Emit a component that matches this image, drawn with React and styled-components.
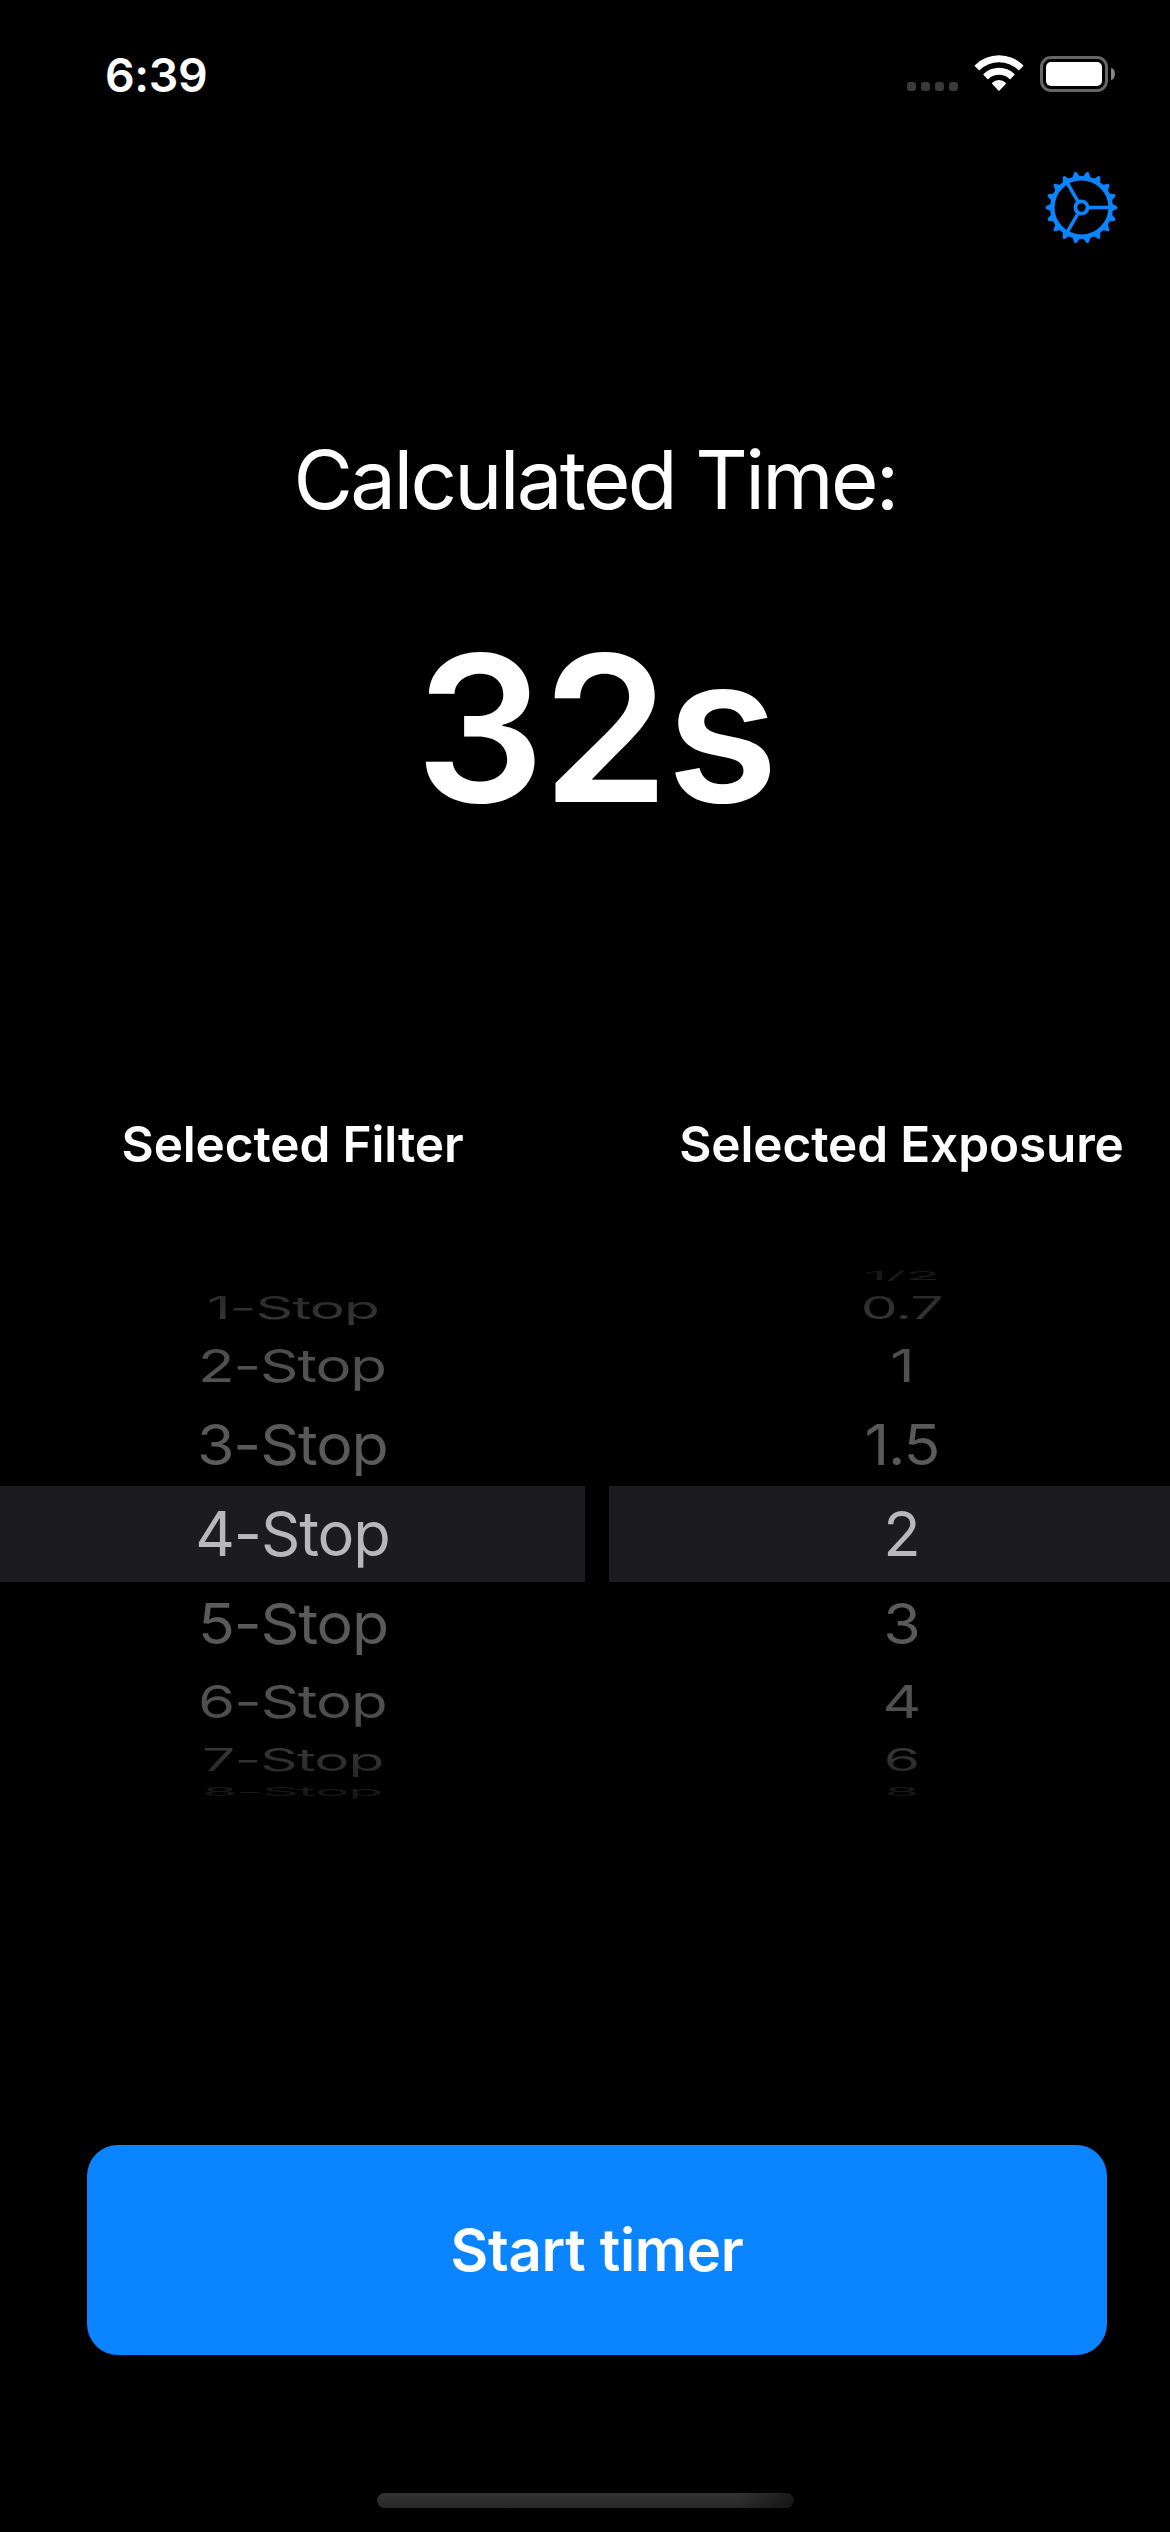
import React from "react";
import styled, { createGlobalStyle } from "styled-components";

const GlobalStyle = createGlobalStyle`
  html, body { margin: 0; padding: 0; background: #000; }
  body { overflow: hidden; }
  *, *::before, *::after { box-sizing: border-box; }
`;

const Screen = styled.div`
  display: flex;
  flex-direction: column;
  width: 1170px;
  height: 2532px;
  overflow: hidden;
  background: #000;
  color: #fff;
  font-family: Inter, "Liberation Sans", sans-serif;
`;

const StatusBar = styled.header`
  display: flex;
  justify-content: space-between;
  height: 141px;
  padding: 54px 55px 0 105px;
`;

const Clock = styled.time`
  font-size: 46.5px;
  font-weight: 600;
  line-height: 42px;
  letter-spacing: -0.4px;
`;

const Indicators = styled.div`
  display: flex;
  align-items: flex-start;
`;

const SignalDots = styled.div`
  display: flex;
  gap: 5px;
  margin: 28px 16px 0 0;
`;

const Dot = styled.span`
  width: 9px;
  height: 9px;
  border-radius: 3px;
  background: #3a3a3a;
`;

const WifiIcon = styled.svg`
  display: block;
  width: 50px;
  height: 38px;
  margin-right: 16px;
`;

const Battery = styled.div`
  display: flex;
  align-items: center;
  gap: 3px;
  margin-top: 2px;
`;

const BatteryShell = styled.div`
  display: flex;
  width: 68px;
  height: 36px;
  padding: 3px;
  border: 3px solid #666;
  border-radius: 11px;
`;

const BatteryLevel = styled.div`
  flex: 1;
  border-radius: 5px;
  background: #fff;
`;

const BatteryTip = styled.div`
  width: 4px;
  height: 12px;
  border-radius: 0 4px 4px 0 / 0 6px 6px 0;
  background: #858585;
`;

const Toolbar = styled.nav`
  display: flex;
  justify-content: flex-end;
  height: 132px;
  padding: 30px 52px 0 0;
`;

const IconButton = styled.button`
  width: 73px;
  height: 73px;
  padding: 0;
  border: 0;
  background: none;
  color: #0a84ff;

  svg { display: block; width: 100%; height: 100%; }
`;

const Content = styled.main`
  display: flex;
  flex-direction: column;
  width: 1194px;
`;

const Result = styled.section`
  display: flex;
  flex-direction: column;
  align-items: center;
  height: 827px;
  padding-top: 156.5px;
`;

const ResultLabel = styled.h1`
  margin: 0 4px 0 0;
  font-size: 81.5px;
  font-weight: 400;
  line-height: 100px;
  letter-spacing: -2.7px;
`;

const ResultValue = styled.output`
  margin: 48px 3px 0 0;
  font-size: 203.6px;
  font-weight: 600;
  line-height: 300px;
  letter-spacing: -2.6px;
`;

const Pickers = styled.section`
  display: grid;
  grid-template-columns: 585px 585px;
  column-gap: 24px;
`;

const PickerColumn = styled.div`
  display: flex;
  flex-direction: column;
  align-items: center;
`;

const PickerTitle = styled.h2`
  margin: 14px 0 92px;
  font-size: 49.5px;
  font-weight: 600;
  line-height: 60px;
  letter-spacing: -0.13px;
  white-space: nowrap;
`;

const Wheel = styled.ul`
  display: flex;
  flex-direction: column;
  align-self: stretch;
  margin: 0;
  padding: 0;
  list-style: none;
`;

const WheelRow = styled.li`
  display: flex;
  align-items: center;
  justify-content: center;
  height: ${(p) => p.$step.height}px;
  background: ${(p) => (p.$selected ? "#1c1c1e" : "transparent")};
`;

const WheelLabel = styled.span`
  flex: none;
  padding: 0 4px;
  color: transparent;
  background: linear-gradient(
    ${(p) => (p.$below ? "to bottom" : "to top")},
    ${(p) => p.$step.near},
    ${(p) => p.$step.far}
  );
  background-clip: text;
  -webkit-background-clip: text;
  font-size: 61.4px;
  line-height: 76px;
  letter-spacing: -1.15px;
  white-space: pre;
  transform: scale(${(p) => p.$step.sx}, ${(p) => p.$step.sy});
`;

const Footer = styled.footer`
  display: flex;
  flex-direction: column;
  padding: 343px 87px 0;
`;

const StartButton = styled.button`
  height: 210px;
  padding: 0;
  border: 0;
  border-radius: 31px;
  background: #0a84ff;
  color: #fff;
  font-family: inherit;
  font-size: 58px;
  font-weight: 600;
  letter-spacing: -0.3px;
`;

const HomeIndicator = styled.div`
  width: 417px;
  height: 15px;
  margin: auto auto 24px 377px;
  border-radius: 8px;
  background: linear-gradient(100deg, transparent 86%, rgba(0, 0, 0, 0.5) 100%),
    linear-gradient(#333, #282828);
`;

const STEPS = [
  { height: 96, sx: 1, sy: 1, near: "#b8b8ba", far: "#b8b8ba" },
  { height: 83.2, sx: 0.99, sy: 0.925, near: "#5c5c5c", far: "#585858" },
  { height: 73, sx: 0.978, sy: 0.745, near: "#555", far: "#4a4a4a" },
  { height: 43.6, sx: 0.958, sy: 0.5, near: "#3a3a3a", far: "#262626" },
  { height: 20.4, sx: 0.935, sy: 0.2, near: "#1c1c1c", far: "#141414" },
];

const FILTERS = ["", "1-Stop", "2-Stop", "3-Stop", "4-Stop", "5-Stop", "6-Stop", "7-Stop", "8-Stop"];
const EXPOSURES = ["1/2", "0.7", "1", "1.5", "2", "3", "4", "6", "8"];
const SELECTED = 4;

function Picker({ title, options }) {
  return (
    <PickerColumn>
      <PickerTitle>{title}</PickerTitle>
      <Wheel>
        {options.map((option, i) => {
          const step = STEPS[Math.abs(i - SELECTED)];
          return (
            <WheelRow key={i} $step={step} $selected={i === SELECTED}>
              <WheelLabel $step={step} $below={i > SELECTED}>{option}</WheelLabel>
            </WheelRow>
          );
        })}
      </Wheel>
    </PickerColumn>
  );
}

function Gear() {
  const teeth = Array.from({ length: 18 }, (_, i) => i * 20);
  return (
    <svg viewBox="-36.5 -36.5 73 73" fill="none" stroke="currentColor">
      <circle r="29.2" strokeWidth="4.6" />
      <circle r="6.1" strokeWidth="3.8" />
      {[0, 120, 240].map((a) => (
        <path key={a} d="M7.5 0H28" strokeWidth="3.5" transform={`rotate(${a})`} />
      ))}
      {teeth.map((a) => (
        <path
          key={a}
          d="M30.5 -3.8L34.6 -1.8Q36 -1.4 36 0Q36 1.4 34.6 1.8L30.5 3.8Z"
          fill="currentColor"
          stroke="none"
          transform={`rotate(${a})`}
        />
      ))}
    </svg>
  );
}

function Wifi() {
  return (
    <WifiIcon viewBox="974 54 50 38" fill="#fff">
      <path d="M974.9 65.2A34.2 34.2 0 0 1 1023.1 65.2Q1023.6 65.8 1023.1 66.3L1019.3 70.1Q1018.8 70.5 1018.2 70A27.6 27.6 0 0 0 979.8 70Q979.2 70.5 978.7 70.1L974.9 66.3Q974.4 65.8 974.9 65.2Z" />
      <path d="M983.6 74A22 22 0 0 1 1014.4 74Q1015 74.6 1014.4 75.1L1010.6 78.9Q1010.1 79.4 1009.5 78.9A15.3 15.3 0 0 0 988.5 78.9Q987.9 79.4 987.4 78.9L983.6 75.1Q983 74.6 983.6 74Z" />
      <path d="M992.3 82.7A9.8 9.8 0 0 1 1005.7 82.7Q1006.3 83.3 1005.7 83.9L999.6 90.4Q999 90.9 998.4 90.4L992.3 83.9Q991.7 83.3 992.3 82.7Z" />
    </WifiIcon>
  );
}

export default function App() {
  return (
    <Screen>
      <GlobalStyle />
      <StatusBar>
        <Clock>6:39</Clock>
        <Indicators>
          <SignalDots>
            <Dot />
            <Dot />
            <Dot />
            <Dot />
          </SignalDots>
          <Wifi />
          <Battery>
            <BatteryShell>
              <BatteryLevel />
            </BatteryShell>
            <BatteryTip />
          </Battery>
        </Indicators>
      </StatusBar>
      <Toolbar>
        <IconButton aria-label="Settings">
          <Gear />
        </IconButton>
      </Toolbar>
      <Content>
        <Result>
          <ResultLabel>Calculated Time:</ResultLabel>
          <ResultValue>32s</ResultValue>
        </Result>
        <Pickers>
          <Picker title="Selected Filter" options={FILTERS} />
          <Picker title="Selected Exposure" options={EXPOSURES} />
        </Pickers>
        <Footer>
          <StartButton>Start timer</StartButton>
        </Footer>
      </Content>
      <HomeIndicator />
    </Screen>
  );
}
